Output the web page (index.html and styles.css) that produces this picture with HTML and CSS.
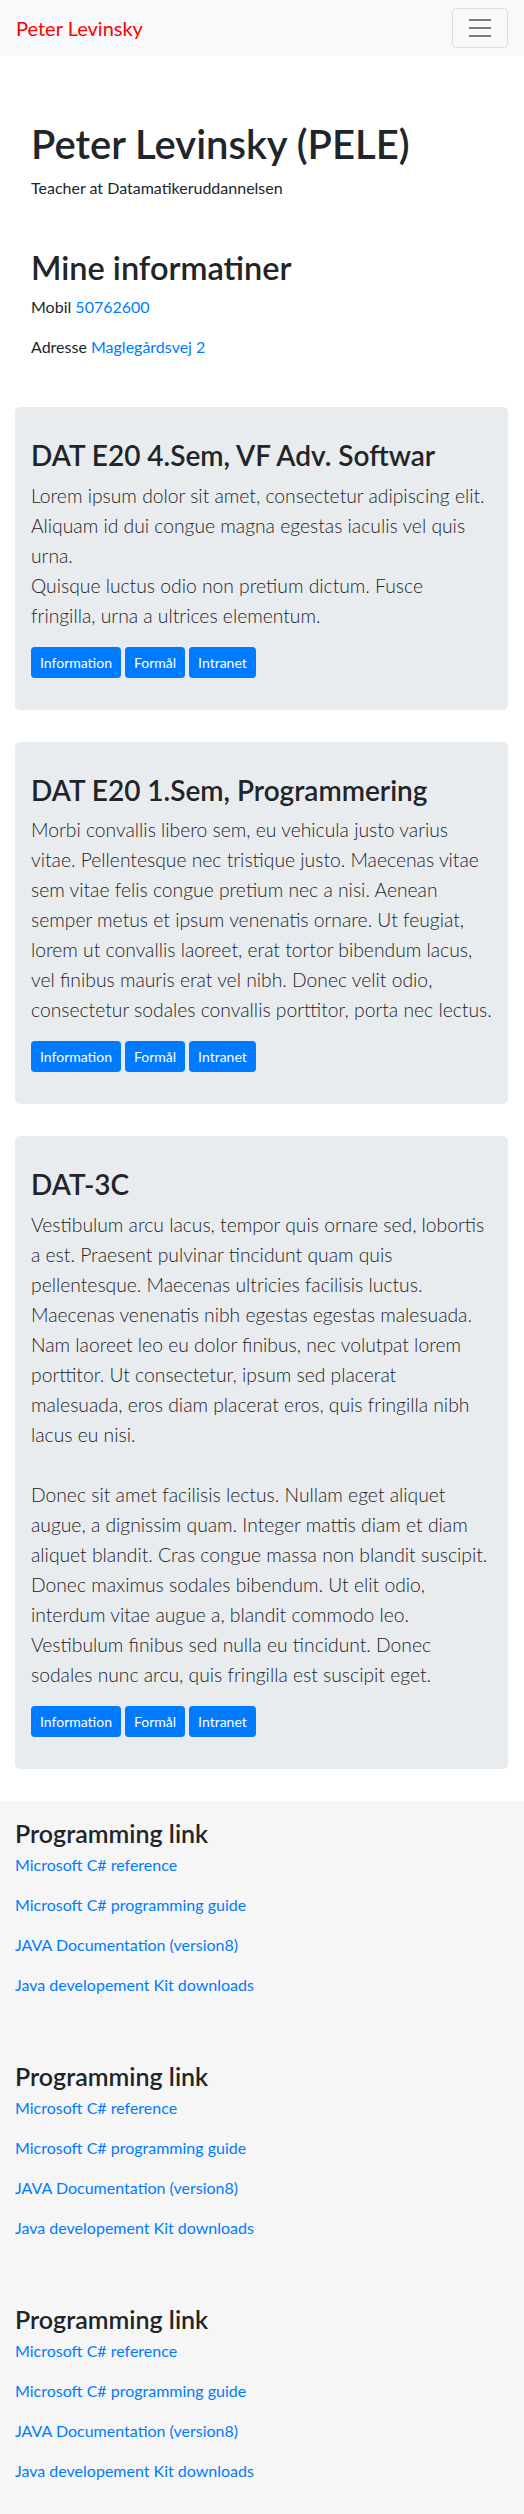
FILE: index.html
```html
<!DOCTYPE html>
<html lang="da">
<head>
<meta charset="utf-8">
<title>Peter Levinsky</title>
<link rel="stylesheet" href="styles.css">
</head>
<body>
<nav class="navbar">
  <a class="brand" href="#">Peter Levinsky</a>
  <button class="toggler" type="button" aria-label="Toggle navigation">
    <svg class="toggler-icon" width="30" height="30" viewBox="0 0 30 30"><path d="M4 7h22M4 15h22M4 23h22" stroke="rgba(0,0,0,0.5)" stroke-width="2" stroke-linecap="butt" fill="none"/></svg>
  </button>
</nav>

<main class="container">
  <header class="intro">
    <h1>Peter Levinsky (PELE)</h1>
    <p>Teacher at Datamatikeruddannelsen</p>
  </header>

  <section class="info">
    <h2>Mine informatiner</h2>
    <p>Mobil <a href="#">50762600</a></p>
    <p>Adresse <a href="#">Maglegårdsvej 2</a></p>
  </section>

  <section class="course">
    <h3>DAT E20 4.Sem, VF Adv. Softwar</h3>
    <p class="lead">Lorem ipsum dolor sit amet, consectetur adipiscing elit. Aliquam id dui congue magna egestas iaculis vel quis urna.<br>Quisque luctus odio non pretium dictum. Fusce fringilla, urna a ultrices elementum.</p>
    <div class="btns"><a class="btn" href="#">Information</a><a class="btn" href="#">Formål</a><a class="btn" href="#">Intranet</a></div>
  </section>

  <section class="course">
    <h3>DAT E20 1.Sem, Programmering</h3>
    <p class="lead">Morbi convallis libero sem, eu vehicula justo varius vitae. Pellentesque nec tristique justo. Maecenas vitae sem vitae felis congue pretium nec a nisi. Aenean semper metus et ipsum venenatis ornare. Ut feugiat, lorem ut convallis laoreet, erat tortor bibendum lacus, vel finibus mauris erat vel nibh. Donec velit odio, consectetur sodales convallis porttitor, porta nec lectus.</p>
    <div class="btns"><a class="btn" href="#">Information</a><a class="btn" href="#">Formål</a><a class="btn" href="#">Intranet</a></div>
  </section>

  <section class="course">
    <h3>DAT-3C</h3>
    <p class="lead">Vestibulum arcu lacus, tempor quis ornare sed, lobortis a est. Praesent pulvinar tincidunt quam quis pellentesque. Maecenas ultricies facilisis luctus. Maecenas venenatis nibh egestas egestas malesuada. Nam laoreet leo eu dolor finibus, nec volutpat lorem porttitor. Ut consectetur, ipsum sed placerat malesuada, eros diam placerat eros, quis fringilla nibh lacus eu nisi.<br><br>Donec sit amet facilisis lectus. Nullam eget aliquet augue, a dignissim quam. Integer mattis diam et diam aliquet blandit. Cras congue massa non blandit suscipit. Donec maximus sodales bibendum. Ut elit odio, interdum vitae augue a, blandit commodo leo. Vestibulum finibus sed nulla eu tincidunt. Donec sodales nunc arcu, quis fringilla est suscipit eget.</p>
    <div class="btns"><a class="btn" href="#">Information</a><a class="btn" href="#">Formål</a><a class="btn" href="#">Intranet</a></div>
  </section>
</main>

<footer class="footer">
  <div class="link-block">
    <h4>Programming link</h4>
    <p><a href="#">Microsoft C# reference</a></p>
    <p><a href="#">Microsoft C# programming guide</a></p>
    <p><a href="#">JAVA Documentation (version8)</a></p>
    <p><a href="#">Java developement Kit downloads</a></p>
  </div>
  <div class="link-block">
    <h4>Programming link</h4>
    <p><a href="#">Microsoft C# reference</a></p>
    <p><a href="#">Microsoft C# programming guide</a></p>
    <p><a href="#">JAVA Documentation (version8)</a></p>
    <p><a href="#">Java developement Kit downloads</a></p>
  </div>
  <div class="link-block">
    <h4>Programming link</h4>
    <p><a href="#">Microsoft C# reference</a></p>
    <p><a href="#">Microsoft C# programming guide</a></p>
    <p><a href="#">JAVA Documentation (version8)</a></p>
    <p><a href="#">Java developement Kit downloads</a></p>
  </div>
</footer>
</body>
</html>
```
FILE: styles.css
```css
* { box-sizing: border-box; }

body {
  margin: 0;
  font-family: Lato, "Open Sans", sans-serif;
  font-size: 16px;
  line-height: 1.5;
  color: #212529;
  background: #fff;
}

a { color: #007bff; text-decoration: none; }

h1, h2, h3, h4 {
  margin: 0 0 8px;
  font-weight: 600;
  line-height: 1.2;
  color: #212529;
}

p { margin: 0 0 16px; }

/* Navbar */
.navbar {
  display: flex;
  align-items: center;
  justify-content: space-between;
  padding: 8px 16px;
  background: #f8f9fa;
}

.brand {
  color: #ff0000;
  font-size: 20px;
  line-height: 30px;
  padding: 5px 0;
}

.toggler {
  display: flex;
  padding: 4px 12px;
  background: transparent;
  border: 1px solid rgba(0, 0, 0, 0.1);
  border-radius: 4px;
}

.toggler-icon { display: block; }

/* Main */
.container { padding: 0 16px 0 15px; }

.intro { padding: 64px 16px 32px; }
.intro h1 { font-size: 40px; }

.info { padding: 0 16px 32px; }
.info h2 { font-size: 32.5px; }

.course {
  background: #e9ecef;
  border-radius: 4.8px;
  padding: 32px 16px;
  margin-bottom: 32px;
}

.course h3 { font-size: 28px; }

.lead {
  font-size: 19.3px;
  line-height: 30px;
  font-weight: 300;
}

.btns {
  display: flex;
  gap: 4px;
}

.btn {
  display: inline-block;
  padding: 4px 8px;
  font-size: 14px;
  line-height: 21px;
  color: #fff;
  background: #007bff;
  border: 1px solid #007bff;
  border-radius: 3.2px;
}

/* Footer links */
.footer { background: #f6f6f6; }

.link-block { padding: 17px 15px 31px; }

.link-block h4 {
  font-size: 25px;
  margin-bottom: 5px;
}
```
